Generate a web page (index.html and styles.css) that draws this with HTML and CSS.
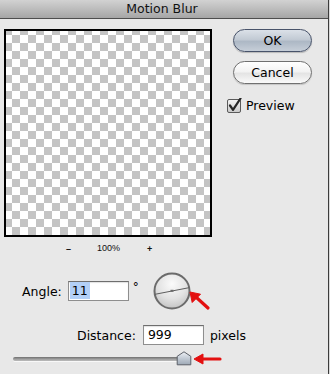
FILE: index.html
```html
<!DOCTYPE html>
<html>
<head>
<meta charset="utf-8">
<link rel="stylesheet" href="styles.css">
</head>
<body>
<div class="window">
  <div class="titlebar">Motion Blur</div>
  <div class="top">
    <div class="left">
      <div class="preview"></div>
      <div class="zoombar">
        <span class="zminus">–</span>
        <span class="zpct">100%</span>
        <span class="zplus">+</span>
      </div>
    </div>
    <div class="right">
      <div class="btn btn-ok">OK</div>
      <div class="btn btn-cancel">Cancel</div>
      <label class="check">
        <svg class="cbox" width="15" height="15" viewBox="0 0 15 15">
          <defs>
            <linearGradient id="cbg" x1="0" y1="0" x2="0" y2="1">
              <stop offset="0" stop-color="#f4f4f4"/>
              <stop offset="1" stop-color="#c9c9c9"/>
            </linearGradient>
          </defs>
          <rect x="0.5" y="1.5" width="13" height="13" rx="1.5" fill="url(#cbg)" stroke="#5a5a5a"/>
          <path d="M3 7.5 L6 11.8 L13.5 0.5" fill="none" stroke="#262626" stroke-width="2.2" stroke-linecap="round" stroke-linejoin="round"/>
        </svg>
        <span>Preview</span>
      </label>
    </div>
  </div>
  <div class="angle-row">
    <span class="lbl">Angle:</span>
    <div class="field field-angle"><span class="sel">11</span></div>
    <span class="deg">°</span>
    <svg class="dial" width="38" height="38" viewBox="0 0 38 38">
      <defs>
        <radialGradient id="dg" cx="0.5" cy="0.3" r="0.7">
          <stop offset="0" stop-color="#fbfbfb"/>
          <stop offset="0.6" stop-color="#e2e2e2"/>
          <stop offset="1" stop-color="#c4c4c4"/>
        </radialGradient>
      </defs>
      <circle cx="19" cy="19" r="17.5" fill="url(#dg)" stroke="#6b6b6b" stroke-width="2"/>
      <line x1="2" y1="22.3" x2="36" y2="15.7" stroke="#5e5e5e" stroke-width="1"/>
      <rect x="17.5" y="17.8" width="3" height="2" fill="#6a6a6a"/>
    </svg>
    <svg class="arrow arrow-dial" width="24" height="22" viewBox="0 0 24 22">
      <path d="M19 17 L8 7" stroke="#e31010" stroke-width="3.2" stroke-linecap="round"/>
      <path d="M1 1 L11.5 3.2 L3.2 11.5 Z" fill="#e31010" stroke="#e31010" stroke-width="1" stroke-linejoin="round"/>
    </svg>
  </div>
  <div class="dist-row">
    <span class="lbl">Distance:</span>
    <div class="field field-dist">999</div>
    <span class="unit">pixels</span>
  </div>
  <div class="slider">
    <div class="track"></div>
    <svg class="thumb" width="16" height="15" viewBox="0 0 16 15">
      <defs>
        <linearGradient id="tg" x1="0" y1="0" x2="0" y2="1">
          <stop offset="0" stop-color="#eef1f5"/>
          <stop offset="0.5" stop-color="#c3cbd5"/>
          <stop offset="1" stop-color="#9ea9b6"/>
        </linearGradient>
      </defs>
      <path d="M8 0.8 L14.8 5.3 L14.8 13.8 L1.2 13.8 L1.2 5.3 Z" fill="url(#tg)" stroke="#5c6068" stroke-width="1" stroke-linejoin="round"/>
    </svg>
    <svg class="arrow arrow-slider" width="30" height="12" viewBox="0 0 30 12">
      <path d="M27 6 L9 6" stroke="#e31010" stroke-width="3.2" stroke-linecap="round"/>
      <path d="M1 6 L10 1 L10 11 Z" fill="#e31010" stroke="#e31010" stroke-width="1" stroke-linejoin="round"/>
    </svg>
  </div>
</div>
</body>
</html>
```
FILE: styles.css
```css
html, body {
  margin: 0;
  padding: 0;
}
body {
  width: 330px;
  height: 374px;
  overflow: hidden;
  background: #d9d9d9;
  font-family: "DejaVu Sans", "Liberation Sans", sans-serif;
  color: #000;
}
.window {
  width: 328px;
  height: 374px;
  background: #e8e8e8;
  border-right: 1px solid #3c3c3c;
}
.titlebar {
  height: 18px;
  line-height: 18px;
  border-bottom: 1px solid #4e4e4e;
  background: linear-gradient(#d2d2d2, #a6a6a6);
  text-align: center;
  font-size: 12.5px;
  color: #111;
  padding-right: 4px;
}
.top {
  display: flex;
  padding: 10px 0 0 4px;
}
.left {
  width: 208px;
  display: flex;
  flex-direction: column;
}
.preview {
  width: 208px;
  height: 208px;
  box-sizing: border-box;
  border: 2px solid #000;
  background: repeating-conic-gradient(#c4c4c4 0 25%, #ffffff 0 50%) -10px -4px / 16px 16px;
}
.zoombar {
  display: flex;
  align-items: center;
  height: 10px;
  margin-top: 6px;
  padding-left: 62px;
  font-family: "Liberation Sans", sans-serif;
  font-size: 9px;
  line-height: 10px;
  color: #111;
}
.zminus {
  width: 5px;
  margin-top: 2px;
  font-weight: bold;
}
.zpct {
  margin-left: 26px;
}
.zplus {
  margin-left: 27px;
  margin-top: 2px;
  font-weight: bold;
}
.right {
  margin-left: 21px;
  display: flex;
  flex-direction: column;
}
.btn {
  width: 79px;
  height: 23px;
  box-sizing: border-box;
  border-radius: 12px;
  text-align: center;
  font-size: 12.5px;
  line-height: 21px;
  color: #000;
}
.btn-ok {
  border: 1px solid #48536a;
  background: linear-gradient(#dbe1e8 0%, #c2cad4 45%, #adb8c5 55%, #c6ced8 100%);
  box-shadow: 0 1px 1px rgba(0,0,0,0.2);
}
.btn-cancel {
  margin-top: 9px;
  border: 1px solid #707070;
  background: linear-gradient(#ffffff 0%, #f3f3f3 45%, #e4e4e4 55%, #fafafa 100%);
  box-shadow: 0 1px 1px rgba(0,0,0,0.15);
}
.check {
  display: flex;
  align-items: center;
  margin-top: 14px;
  margin-left: -6px;
  font-size: 12.5px;
}
.cbox {
  margin-right: 4px;
}
.angle-row {
  position: relative;
  display: flex;
  align-items: center;
  height: 38px;
  margin-top: 19px;
  padding-left: 22px;
  font-size: 12.5px;
}
.field {
  box-sizing: border-box;
  background: #fff;
  border: 1px solid #8e8e8e;
  border-top-color: #6e6e6e;
  box-shadow: inset 0 1px 1px rgba(0,0,0,0.12);
  font-size: 12.5px;
  line-height: 18px;
  color: #000;
}
.field-angle {
  width: 61px;
  height: 20px;
  margin-left: 6px;
  padding-left: 1px;
}
.sel {
  display: inline-block;
  background: #b3d0f7;
  padding: 0 2px 0 2px;
  line-height: 17px;
}
.deg {
  margin-left: 4px;
  margin-top: -8px;
  font-size: 12px;
}
.dial {
  margin-left: 14px;
}
.arrow {
  position: absolute;
}
.arrow-dial {
  left: 189px;
  top: 19px;
}
.dist-row {
  display: flex;
  align-items: center;
  height: 20px;
  margin-top: 15px;
  padding-left: 77px;
  font-size: 12.5px;
}
.field-dist {
  width: 61px;
  height: 20px;
  margin-left: 7px;
  padding-left: 4px;
}
.unit {
  margin-left: 6px;
}
.slider {
  position: relative;
  margin-top: 12px;
  margin-left: 13px;
  height: 6px;
}
.track {
  width: 174px;
  height: 4px;
  border-radius: 2px;
  background: linear-gradient(#6f6f6f, #a3a3a3 60%, #bdbdbd);
  box-shadow: 0 1px 0 rgba(255,255,255,0.7);
}
.thumb {
  position: absolute;
  left: 163px;
  top: -6px;
}
.arrow-slider {
  left: 180px;
  top: -4px;
}
```
